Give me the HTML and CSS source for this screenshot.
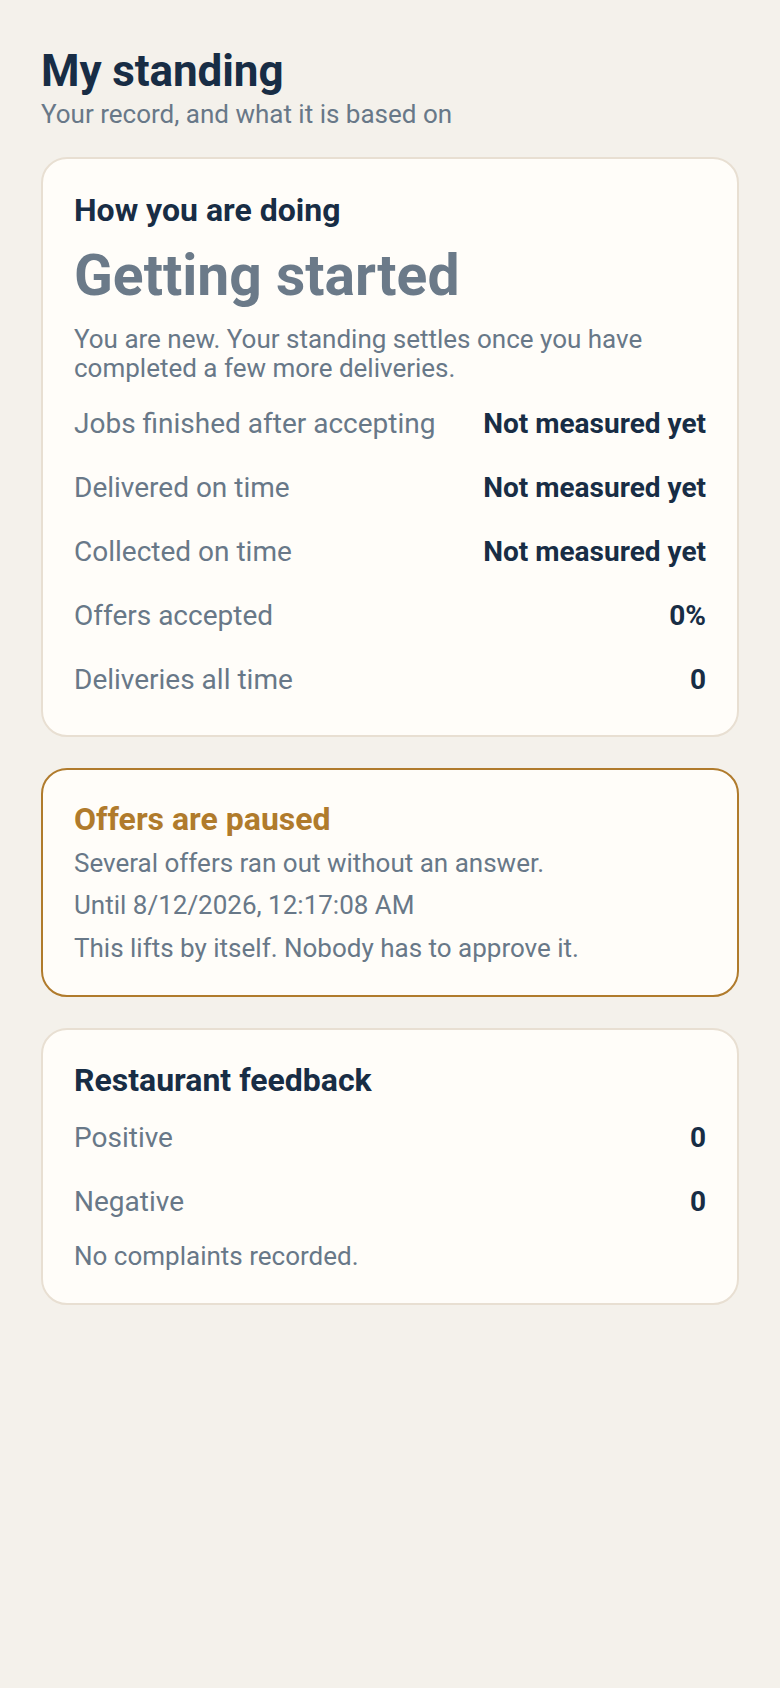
FILE: index.html
```html
<!DOCTYPE html>
<html lang="en">
<head>
<meta charset="utf-8">
<title>My standing</title>
<link rel="stylesheet" href="styles.css">
</head>
<body>
<main class="page">
  <header class="page-head">
    <h1 class="page-title">My standing</h1>
    <p class="page-sub">Your record, and what it is based on</p>
  </header>

  <section class="card card-summary">
    <h2 class="card-title">How you are doing</h2>
    <p class="status">Getting started</p>
    <p class="desc">You are new. Your standing settles once you have completed a few more deliveries.</p>
    <div class="rows rows-main">
      <div class="row"><span class="label">Jobs finished after accepting</span><span class="value">Not measured yet</span></div>
      <div class="row"><span class="label">Delivered on time</span><span class="value">Not measured yet</span></div>
      <div class="row"><span class="label">Collected on time</span><span class="value">Not measured yet</span></div>
      <div class="row"><span class="label">Offers accepted</span><span class="value">0%</span></div>
      <div class="row"><span class="label">Deliveries all time</span><span class="value">0</span></div>
    </div>
  </section>

  <section class="card card-warn">
    <h2 class="card-title warn-title">Offers are paused</h2>
    <div class="lines">
      <p class="line">Several offers ran out without an answer.</p>
      <p class="line">Until 8/12/2026, 12:17:08 AM</p>
      <p class="line">This lifts by itself. Nobody has to approve it.</p>
    </div>
  </section>

  <section class="card card-feedback">
    <h2 class="card-title">Restaurant feedback</h2>
    <div class="rows rows-feedback">
      <div class="row"><span class="label">Positive</span><span class="value">0</span></div>
      <div class="row"><span class="label">Negative</span><span class="value">0</span></div>
    </div>
    <p class="note">No complaints recorded.</p>
  </section>
</main>
</body>
</html>
```

FILE: styles.css
```css
* { box-sizing: border-box; }

html, body {
  margin: 0;
  padding: 0;
  background: #f4f1eb;
}

body {
  font-family: Roboto, "Liberation Sans", Arial, sans-serif;
  color: #182d45;
  min-height: 1688px;
}

.page {
  padding: 45px 41px 60px;
  display: flex;
  flex-direction: column;
}

.page-head {
  margin-bottom: 28px;
}

.page-title {
  margin: 0;
  font-size: 44px;
  line-height: 52.8px;
  font-weight: 700;
  color: #182d45;
  letter-spacing: -0.1px;
}

.page-sub {
  margin: 2px 0 0;
  font-size: 26px;
  line-height: 29px;
  color: #687888;
}

.card {
  background: #fffdf9;
  border: 2px solid #e8dfd2;
  border-radius: 26px;
  padding: 32px 31px;
  margin-bottom: 31px;
}

.card-warn {
  border-color: #b07b2c;
  padding: 30px 31px 32px;
}

.card-feedback {
  padding: 31px 31px 32px;
}

.card-title {
  margin: 0;
  font-size: 32px;
  line-height: 38.4px;
  font-weight: 700;
  color: #182d45;
}

.warn-title {
  color: #b07b2c;
}

.status {
  margin: 13px 0 0;
  font-size: 57px;
  line-height: 68.4px;
  font-weight: 700;
  color: #6b7a89;
}

.desc {
  margin: 14px 0 0;
  font-size: 26px;
  line-height: 29px;
  color: #687888;
}

.rows {
  display: flex;
  flex-direction: column;
  gap: 25px;
}

.rows-main {
  margin-top: 21.5px;
  margin-bottom: 4px;
}

.rows-feedback {
  margin-top: 18.7px;
}

.row {
  display: flex;
  justify-content: space-between;
  align-items: baseline;
  font-size: 28px;
  line-height: 39px;
}

.label {
  color: #687888;
}

.value {
  font-weight: 700;
  color: #182d45;
}

.lines {
  margin-top: 10.5px;
  display: flex;
  flex-direction: column;
  gap: 13.4px;
}

.line {
  margin: 0;
  font-size: 26px;
  line-height: 29px;
  color: #687888;
}

.note {
  margin: 21px 0 0;
  font-size: 26px;
  line-height: 29px;
  color: #687888;
}
```
